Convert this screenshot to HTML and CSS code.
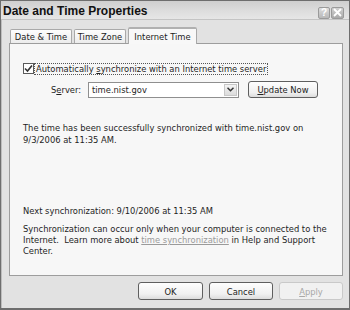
FILE: index.html
```html
<!DOCTYPE html>
<html>
<head>
<meta charset="utf-8">
<link rel="stylesheet" href="styles.css">
</head>
<body>
<div class="window">
  <div class="titlebar">
    <span class="title">Date and Time Properties</span>
    <div class="tbtns">
      <span class="tbtn">?</span>
      <span class="tbtn close"><svg width="9" height="9" viewBox="0 0 9 9"><path d="M1 1L8 8M8 1L1 8" stroke="#fff" stroke-width="1.8"/></svg></span>
    </div>
  </div>
  <div class="body">
    <div class="tabs">
      <span class="tab">Date &amp; Time</span>
      <span class="tab">Time Zone</span>
      <span class="tab active">Internet Time</span>
    </div>
    <div class="panel">
      <div class="checkrow">
        <span class="checkbox"><svg width="9" height="9" viewBox="0 0 9 9"><path d="M1 4.5L3.5 7L8 1.5" stroke="#333" stroke-width="1.6" fill="none"/></svg></span>
        <span class="focus">Automatically <u>s</u>ynchronize with an Internet time server</span>
      </div>
      <div class="serverrow">
        <span class="slabel">S<u>e</u>rver:</span>
        <div class="combo">
          <span class="cval">time.nist.gov</span>
          <span class="carrow"><svg width="7" height="5" viewBox="0 0 7 5"><path d="M0.5 0.8L3.5 3.8L6.5 0.8" stroke="#333" stroke-width="1.5" fill="none"/></svg></span>
        </div>
        <span class="btn update"><u>U</u>pdate Now</span>
      </div>
      <p class="msg">The time has been successfully synchronized with time.nist.gov on 9/3/2006 at 11:35 AM.</p>
      <p class="next">Next synchronization: 9/10/2006 at 11:35 AM</p>
      <div class="info">
        <span class="line">Synchronization can occur only when your computer is connected to the</span>
        <span class="line">Internet.&nbsp; Learn more about <span class="link">time synchronization</span> in Help and Support</span>
        <span class="line">Center.</span>
      </div>
    </div>
    <div class="buttons">
      <span class="btn">OK</span>
      <span class="btn">Cancel</span>
      <span class="btn disabled"><u>A</u>pply</span>
    </div>
  </div>
</div>
</body>
</html>
```

FILE: styles.css
```css
* { box-sizing: border-box; }
html, body { margin: 0; padding: 0; background: #fff; }
body {
  font-family: "DejaVu Sans Condensed", "Liberation Sans", sans-serif;
  font-size: 9.3px;
  color: #1e1e1e;
}
.window {
  width: 350px;
  height: 310px;
  border: 1px solid #6e6e6e;
  border-bottom-width: 2px;
  background: #e2e2e2;
  display: flex;
  flex-direction: column;
}
.titlebar {
  height: 19px;
  background: linear-gradient(#cfcfcf, #dedede 60%, #e6e6e6);
  border-bottom: 1px solid #c4c4c4;
  display: flex;
  align-items: center;
  justify-content: space-between;
  padding: 0 5px 0 2px;
}
.title {
  font-family: "Liberation Sans", sans-serif;
  font-weight: bold;
  font-size: 12px;
  color: #111;
  margin-top: 2px;
}
.tbtns { display: flex; gap: 1px; margin-top: 5px; }
.tbtn {
  width: 12px;
  height: 12px;
  border: 1px solid #9a9a9a;
  border-radius: 2px;
  background: linear-gradient(#dcdcdc, #b8b8b8);
  font-family: "Liberation Sans", sans-serif;
  font-weight: bold;
  font-size: 10px;
  color: #fff;
  display: flex;
  align-items: center;
  justify-content: center;
  line-height: 1;
}
.tbtn.close { width: 13px; background: linear-gradient(#d0d0d0, #aaaaaa); }
.body {
  flex: 1;
  padding: 7px 6px 0 7px;
  display: flex;
  flex-direction: column;
  border-left: 1px solid #bdbdbd;
}
.tabs {
  display: flex;
  align-items: flex-end;
  height: 16px;
  padding-left: 1px;
  gap: 2px;
  position: relative;
  z-index: 1;
}
.tab {
  height: 14px;
  border: 1px solid #a9a9a9;
  border-bottom: none;
  border-radius: 2px 2px 0 0;
  background: linear-gradient(#fdfdfd, #ececec);
  padding: 0 3px;
  display: flex;
  align-items: center;
  justify-content: center;
  white-space: nowrap;
  color: #222;
}
.tab:nth-child(1) { width: 62px; }
.tab:nth-child(2) { width: 52px; }
.tab.active {
  height: 17px;
  margin-bottom: -1px;
  background: #f8f8f8;
  width: 69px;
  border-top: 2px solid #b0b0b0;
  padding-bottom: 1px;
}
.panel {
  height: 233px;
  border: 1px solid #9d9d9d;
  background: #f7f7f7;
  padding: 19px 10px 0 13px;
}
.checkrow { display: flex; align-items: center; height: 11px; white-space: nowrap; }
.checkbox {
  width: 11px;
  height: 11px;
  border: 1px solid #5a5a5a;
  background: #fff;
  display: flex;
  align-items: center;
  justify-content: center;
}
.focus {
  border: 1px dotted #555;
  padding: 0 1px;
  line-height: 10px;
}
.serverrow {
  display: flex;
  align-items: center;
  margin-top: 7px;
  height: 17px;
}
.slabel { margin-left: 28px; width: 37px; }
.combo {
  width: 151px;
  height: 16px;
  border: 1px solid #8f8f8f;
  background: #fff;
  display: flex;
  align-items: center;
  justify-content: space-between;
  padding: 1px 1px 1px 3px;
}
.carrow {
  width: 13px;
  height: 12px;
  background: linear-gradient(#f4f4f4, #dcdcdc);
  border: 1px solid #c8c8c8;
  display: flex;
  align-items: center;
  justify-content: center;
}
.btn {
  height: 18px;
  width: 64px;
  border: 1px solid #5f5f5f;
  border-radius: 3px;
  background: linear-gradient(#fefefe, #f0f0f0 70%, #dcdcdc);
  display: flex;
  align-items: center;
  justify-content: center;
  white-space: nowrap;
  color: #222;
}
.update { width: 70px; height: 17px; margin-left: 9px; }
.msg { margin: 24px 0 0; line-height: 12px; width: 305px; }
.next { margin: 59px 0 0; line-height: 12px; }
.info { margin: 6px 0 0; display: flex; flex-direction: column; }
.line { display: block; line-height: 11px; white-space: nowrap; }
.link { color: #9a9a9a; text-decoration: underline; }
.buttons {
  display: flex;
  justify-content: flex-end;
  gap: 6px;
  margin-top: 6px;
}
.buttons .btn:first-child { width: 65px; }
.btn.disabled { border-color: #c9c9c9; color: #a8a8a8; background: #f1f1f1; }
```
